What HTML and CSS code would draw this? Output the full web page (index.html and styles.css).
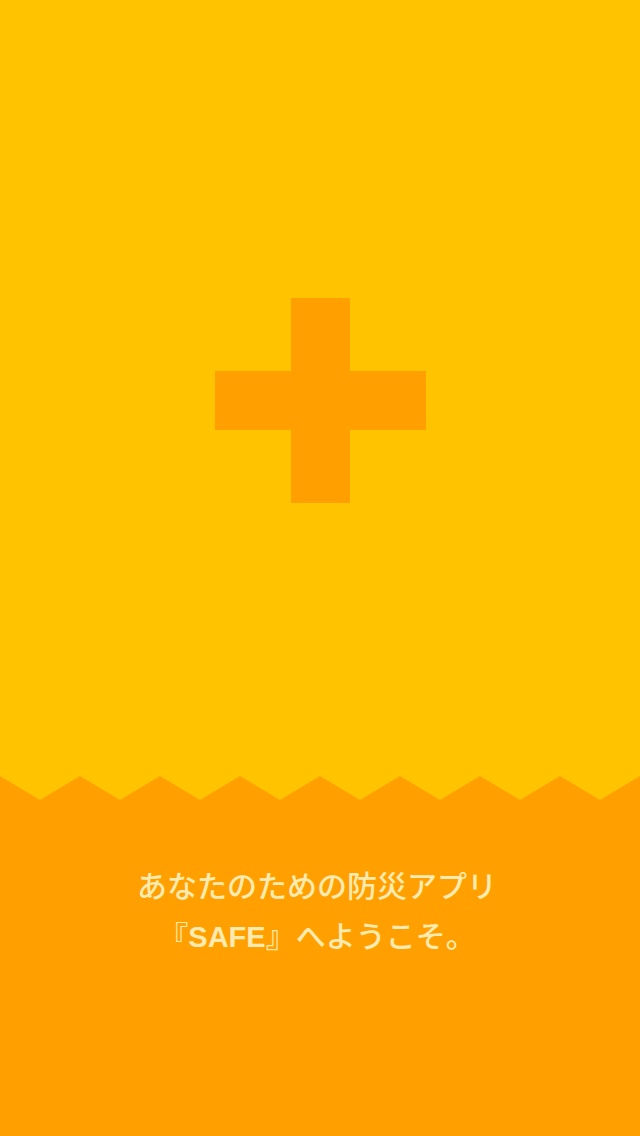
FILE: index.html
```html
<!DOCTYPE html>
<html lang="ja">
<head>
<meta charset="utf-8">
<link rel="stylesheet" href="styles.css">
</head>
<body>
<div class="screen">
  <section class="top">
    <svg class="plus" width="211" height="205" viewBox="0 0 211 205">
      <rect x="76" y="0" width="59" height="205" fill="#FFA000"/>
      <rect x="0" y="73" width="211" height="59" fill="#FFA000"/>
    </svg>
  </section>
  <svg class="zigzag" width="640" height="24" viewBox="0 0 640 24" preserveAspectRatio="none">
    <rect width="640" height="24" fill="#FFC300"/>
    <path d="M0 0 L40 24 L80 0 L120 24 L160 0 L200 24 L240 0 L280 24 L320 0 L360 24 L400 0 L440 24 L480 0 L520 24 L560 0 L600 24 L640 0 L640 24 L0 24 Z" fill="#FFA000"/>
  </svg>
  <section class="bottom">
    <p class="welcome">あなたのための防災アプリ<br>『<span class="latin">SAFE</span>』へようこそ。</p>
  </section>
</div>
</body>
</html>
```
FILE: styles.css
```css
html, body {
  margin: 0;
  padding: 0;
}
body {
  width: 640px;
  height: 1136px;
  overflow: hidden;
  font-family: "Noto Sans CJK JP", "Noto Sans", sans-serif;
}
.screen {
  display: flex;
  flex-direction: column;
  height: 1136px;
}
.top {
  height: 776px;
  background: #FFC300;
  display: flex;
  justify-content: center;
  align-items: flex-start;
  padding-top: 298px;
  box-sizing: border-box;
}
.plus {
  display: block;
  margin-left: 1px;
}
.zigzag {
  display: block;
}
.bottom {
  flex: 1;
  background: #FFA000;
  padding-top: 59px;
  padding-right: 6px;
  box-sizing: border-box;
}
.welcome {
  margin: 0;
  text-align: center;
  color: #FFEAB0;
  font-size: 30px;
  line-height: 50px;
  font-weight: 500;
}
.latin {
  font-family: "Liberation Sans", "Noto Sans", sans-serif;
  font-weight: 700;
  font-size: 29px;
}
```
